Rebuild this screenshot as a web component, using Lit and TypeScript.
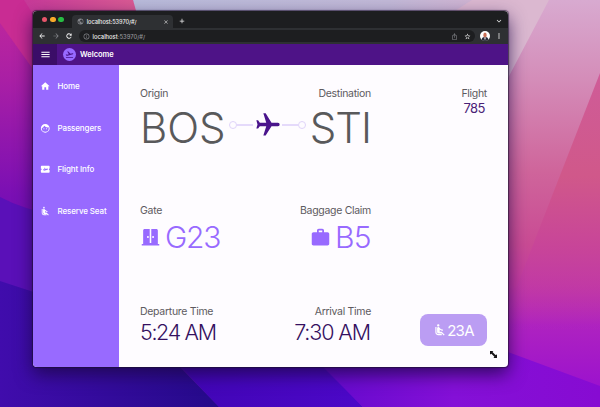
import { LitElement, html, css, svg } from "lit";
import { customElement, property } from "lit/decorators.js";

const ICONS: Record<string, string> = {
  home: "M10 20v-6h4v6h5v-8h3L12 3 2 12h3v8z",
  face: "M10.25 13a1.25 1.25 0 1 1-2.5 0 1.25 1.25 0 0 1 2.5 0zM15 11.75a1.25 1.25 0 1 0 0 2.5 1.25 1.25 0 0 0 0-2.5zM22 12a10 10 0 1 1-20 0 10 10 0 0 1 20 0zM20 12c0-.78-.12-1.53-.33-2.24-.7.15-1.42.24-2.17.24a10 10 0 0 1-7.76-3.69A10.02 10.02 0 0 1 4 11.86V12a8 8 0 1 0 16 0z",
  ticket: "M20.2 12c0-1 .8-2 1.8-2V5.500C22 4.700 21.300 4 20.500 4h-17C2.700 4 2 4.700 2 5.500V10c1 0 1.900.9 1.900 2S3 14 2 14v4.500c0 .8.700 1.500 1.500 1.500h17c.8 0 1.500-.7 1.500-1.500V14c-1 0-1.800-1-1.800-2zM17.700 13.300 8.900 15.700 6.600 11.800l.8-.2 1.300 1 2.200-.6L9 8.800l1.200-.3 3 2.900 3.200-.9c.6-.2 1.300.2 1.500.8s-.1 1.600-.2 2z",
  seat: "M7.590 5.410c-.78-.78-.78-2.050 0-2.830.78-.78 2.050-.78 2.830 0 .78.78.78 2.050 0 2.830-.79.79-2.050.79-2.830 0zM6 16V7H4v9c0 2.760 2.240 5 5 5h6v-2H9c-1.660 0-3-1.340-3-3zM20 20.070 14.930 15H11.500v-3.680c1.400 1.150 3.600 2.160 5.500 2.160v-2.160c-1.660.02-3.610-.87-4.670-2.040l-1.400-1.550c-.19-.21-.43-.38-.69-.5-.29-.14-.62-.23-.96-.23h-.03C8.010 7 7 8.010 7 9.250V15c0 1.660 1.340 3 3 3h5.070l3.500 3.500z",
  plane: "M21 16v-2l-8-5V3.500a1.500 1.500 0 0 0-3 0V9l-8 5v2l8-2.500V19l-2 1.500V22l3.500-1 3.500 1v-1.500L13 19v-5.500z",
  door: "M2 19.300V21h20v-1.700h-1.600V4c0-1-.7-1.700-1.700-1.700h-5.800v16h-1.800v-16H5.300c-1 0-1.700.7-1.700 1.700v15.300zM8.200 10.300h1.700v2.200H8.200zM14.100 10.300h1.700v2.200h-1.700z",
  bag: "M20 6h-4V4c0-1.100-.9-2-2-2h-4c-1.100 0-2 .9-2 2v2H4c-1.100 0-2 .9-2 2v11c0 1.100.9 2 2 2h16c1.100 0 2-.9 2-2V8c0-1.100-.9-2-2-2zm-10 0V4h4v2z",
  takeoff: "M2.500 19h19v2h-19zM22.070 9.640a1.500 1.500 0 0 0-1.840-1.060L14.920 10 8.020 3.570l-1.930.51 4.140 7.170-4.970 1.330-1.970-1.540-1.450.39 2.590 4.490L21 11.490c.81-.23 1.280-1.050 1.070-1.850z",
  menu: "M3 18.200h18v-2.400H3zM3 13.200h18v-2.400H3zM3 8.200h18V5.800H3z",
  back: "M20 10.800H7.830l5.590-5.390L12 4l-8 8 8 8 1.410-1.410-5.580-5.390H20z",
  forward: "m12 4-1.410 1.410L16.170 11H4v2h12.170l-5.580 5.590L12 20l8-8z",
  reload: "M17.650 6.350A8 8 0 1 0 19.730 14h-2.600A5.500 5.500 0 1 1 12 6.500c1.500 0 2.900.6 3.900 1.600L13 11h7V4z",
  info: "M11 7h2v2h-2zm0 4h2v6h-2zm1-9a10 10 0 1 0 0 20 10 10 0 0 0 0-20zm0 18a8 8 0 1 1 0-16 8 8 0 0 1 0 16z",
  share: "m16 5-1.420 1.420-1.590-1.590V16h-1.980V4.830L9.420 6.420 8 5l4-4zm4 5v11c0 1.100-.9 2-2 2H6a2 2 0 0 1-2-2V10c0-1.110.89-2 2-2h3v2H6v11h12V10h-3V8h3a2 2 0 0 1 2 2z",
  star: "m22 9.240-7.190-.62L12 2 9.190 8.630 2 9.240l5.460 4.730L5.820 21 12 17.270 18.180 21l-1.630-7.030zM12 15.400l-3.760 2.270 1-4.280-3.320-2.880 4.380-.38L12 6.100l1.710 4.040 4.380.38-3.320 2.880 1 4.280z",
  close: "M19 6.410 17.590 5 12 10.590 6.410 5 5 6.410 10.590 12 5 17.590 6.410 19 12 13.410 17.590 19 19 17.590 13.410 12z",
  plus: "M21 10.500h-7.500V3h-3v7.500H3v3h7.500V21h3v-7.500H21z",
  chevron: "M5 7 12 13.500 19 7l2 2.200-9 8.600-9-8.600z",
  more: "M12 8a2.200 2.200 0 1 0 0-4.400A2.200 2.200 0 0 0 12 8zm0 6.200a2.200 2.200 0 1 0 0-4.400 2.200 2.200 0 0 0 0 4.400zm0 6.200a2.200 2.200 0 1 0 0-4.400 2.200 2.200 0 0 0 0 4.400z",
  globe: "M12 2a10 10 0 1 0 0 20 10 10 0 0 0 0-20zm-1 17.900A8 8 0 0 1 4.200 10.200L9 15v1c0 1.100.9 2 2 2zm6.900-2.500A2 2 0 0 0 16 16h-1v-3c0-.6-.4-1-1-1H8v-2h2c.6 0 1-.4 1-1V7h2a2 2 0 0 0 2-2v-.4a8 8 0 0 1 2.900 12.800z",
};

@customElement("ui-icon")
export class UiIcon extends LitElement {
  @property() name = "home";
  static styles = css`
    :host { display: block; width: 12px; height: 12px; flex: none; }
    svg { display: block; width: 100%; height: 100%; fill: currentColor; }
  `;
  render() {
    return html`<svg viewBox="0 0 24 24">${svg`<path fill-rule="evenodd" d=${ICONS[this.name]}></path>`}</svg>`;
  }
}

@customElement("desktop-wallpaper")
export class DesktopWallpaper extends LitElement {
  static styles = css`
    :host { display: block; }
    svg { display: block; width: 600px; height: 407px; }
  `;
  render() {
    return html`<svg viewBox="0 0 600 407" preserveAspectRatio="none">
      <defs>
        <linearGradient id="left" x1="0" y1="0" x2="0" y2="1">
          <stop offset="0" stop-color="#c2289b"></stop>
          <stop offset=".2" stop-color="#a91fa5"></stop>
          <stop offset=".48" stop-color="#7a0fb4"></stop>
          <stop offset="1" stop-color="#4a0cae"></stop>
        </linearGradient>
        <linearGradient id="right" x1="0" y1="0" x2="0" y2="1">
          <stop offset="0" stop-color="#d8aad0"></stop>
          <stop offset=".2" stop-color="#d48cb8"></stop>
          <stop offset=".42" stop-color="#cf659b"></stop>
          <stop offset=".6" stop-color="#c94b94"></stop>
          <stop offset=".7" stop-color="#c43aa2"></stop>
          <stop offset=".8" stop-color="#ae22c0"></stop>
          <stop offset="1" stop-color="#960dd2"></stop>
        </linearGradient>
        <linearGradient id="rose" x1="0" y1="0" x2="0" y2="1">
          <stop offset="0" stop-color="#cf5c98"></stop>
          <stop offset=".4" stop-color="#d0588a"></stop>
          <stop offset=".7" stop-color="#c7439a"></stop>
          <stop offset="1" stop-color="#b62cb6" stop-opacity="0"></stop>
        </linearGradient>
        <linearGradient id="top" x1="0" y1="0" x2="1" y2="0">
          <stop offset="0" stop-color="#b9bbda"></stop>
          <stop offset=".75" stop-color="#c2b9d7"></stop>
          <stop offset="1" stop-color="#d0b4d2"></stop>
        </linearGradient>
        <linearGradient id="coral" x1="0" y1="0" x2="1" y2="0">
          <stop offset="0" stop-color="#c73999"></stop>
          <stop offset="1" stop-color="#dc5f92"></stop>
        </linearGradient>
        <linearGradient id="floor" x1="0" y1="0" x2="1" y2="0">
          <stop offset="0" stop-color="#400cac"></stop>
          <stop offset="1" stop-color="#250a8a"></stop>
        </linearGradient>
        <linearGradient id="floor2" x1="0" y1="0" x2="1" y2="0">
          <stop offset="0" stop-color="#4005b4"></stop>
          <stop offset="1" stop-color="#4c08c8"></stop>
        </linearGradient>
        <linearGradient id="floor3" x1="0" y1="0" x2="1" y2="0">
          <stop offset="0" stop-color="#6109cc"></stop>
          <stop offset=".5" stop-color="#8410d7"></stop>
          <stop offset="1" stop-color="#870bd2"></stop>
        </linearGradient>
      </defs>
      <path fill="url(#right)" d="M0 0H600V407H0z"></path>
      <path fill="url(#left)" d="M0 0H250V407H0z"></path>
      <path fill="#c92c93" d="M0 23 45 86V0H0z"></path>
      <path fill="url(#coral)" d="M24 0H133L150 40H50z"></path>
      <path fill="url(#top)" d="M133 0H475V60H150z"></path>
      <path fill="#dbb8d0" d="M472 0H549L508 78V20L450 14z"></path>
      <path fill="url(#rose)" d="M600 73 552 196 500 330H600z"></path>
      <path fill="#5a10b8" d="M0 197Q24 210 60 216V407H0z"></path>
      <path fill="url(#floor)" d="M0 281 180 340V367L219 407H0z"></path>
      <path fill="url(#floor2)" d="M165 350H308L363 407H219z"></path>
      <path fill="url(#floor3)" d="M308 352H508L600 386V407H363z"></path>
    </svg>`;
  }
}

@customElement("app-root")
export class AppRoot extends LitElement {
  static styles = css`
    :host { display: block; position: relative; width: 600px; height: 407px; overflow: hidden; font-family: Inter, "Liberation Sans", sans-serif; }
    * { box-sizing: border-box; }
    .wall { position: absolute; inset: 0; }
    .window { position: absolute; left: 33px; top: 11px; width: 475px; height: 356px; border-radius: 4px; overflow: hidden; background: #fefcff; display: flex; flex-direction: column; }
    .shadow { position: absolute; left: 33px; top: 11px; width: 475px; height: 356px; border-radius: 4px; box-shadow: 0 0 1px .5px #1b102c99, 0 7px 18px #1b0645cc; }
    .tabs { height: 17px; flex: none; background: #1d1e20; display: flex; align-items: center; padding: 0 6px 0 9px; color: #eee; }
    .lights { display: flex; gap: 2.800px; }
    .light { width: 5.400px; height: 5.400px; border-radius: 50%; }
    .red { background: #e7556b; } .amber { background: #f7a92a; } .green { background: #27bd43; }
    .tab { align-self: flex-end; width: 101px; height: 13px; margin-left: 8px; border-radius: 4px 4px 0 0; background: #2e3033; display: flex; align-items: center; padding: 0 4px 0 5px; font-size: 5.600px; font-weight: 500; }
    .tabtext { flex: 1; margin-left: 3px; letter-spacing: -.06px; }
    .i5 { width: 6px; height: 6px; } .i6 { width: 7px; height: 7px; }
    .globe { width: 7px; height: 7px; }
    .plus { width: 6px; height: 6px; margin-left: 6px; margin-top: 3px; flex: none; }
    .end { margin-left: auto; margin-top: 3px; }
    .tools { height: 16px; flex: none; background: #2e3033; display: flex; align-items: center; padding: 0 5px; color: #eee; }
    .nav { width: 8px; height: 8px; margin-right: 5.500px; }
    .more { width: 8px; height: 8px; }
    .dim { color: #85868b; }
    .address { flex: 1; height: 12px; border-radius: 6px; background: #1d1e20; display: flex; align-items: center; padding: 0 4px 0 4px; font-size: 5.800px; font-weight: 500; }
    .url { flex: 1; margin-left: 3px; color: #94959a; } .host { color: #eee; }
    .star { margin-left: 6px; }
    .avatar { width: 10px; height: 10px; margin: 0 5px 0 5px; flex: none; }
    .bar { height: 21px; flex: none; background: #4e1387; display: flex; align-items: center; color: #fff; font-size: 7.500px; font-weight: 600; }
    .burger { width: 24px; height: 21px; background: #3b0d68; display: grid; place-items: center; }
    .burger ui-icon { width: 11px; height: 11px; }
    .logo { width: 13px; height: 13px; border-radius: 50%; background: #986aff; color: #4a148c; display: grid; place-items: center; margin: 0 4px 0 6px; }
    .logo ui-icon { width: 9px; height: 9px; }
    .body { flex: 1; display: flex; min-height: 0; }
    .side { width: 86px; background: #986aff; color: #fff; display: flex; flex-direction: column; flex: none; padding-top: .7px; }
    .item { height: 41.500px; display: flex; align-items: center; padding-left: 6.500px; gap: 7.500px; font-size: 8px; font-weight: 500; letter-spacing: -.12px; white-space: nowrap; }
    .item ui-icon { width: 10.500px; height: 10.500px; }
    .main { flex: 1; display: flex; justify-content: space-between; padding: 21px 21px 0; color: #5d5a60; font-size: 10.500px; letter-spacing: -.3px; line-height: 15px; white-space: nowrap; }
    .trip { width: 231px; display: grid; grid-template-rows: 117px 101px 1fr; }
    .row { display: flex; justify-content: space-between; }
    .code { display: flex; align-items: center; justify-content: space-between; height: 52px; margin-top: 1px; color: #59595b; font-size: 42px; line-height: 52px; font-weight: 300; }
    .route { display: flex; align-items: center; margin-top: -6px; }
    .dot { width: 8px; height: 8px; border: 1.500px solid #e0d4fa; border-radius: 50%; }
    .line { width: 16px; height: 1.500px; background: #e5dafb; }
    .route ui-icon { width: 28px; height: 28px; transform: rotate(90deg); color: #4a148c; margin: 0 .5px; }
    .big { color: #986aff; font-size: 30px; line-height: 39px; font-weight: 300; display: flex; align-items: center; gap: 4px; letter-spacing: -1.200px; }
    .claim { letter-spacing: -.6px; }
    .big ui-icon { width: 21px; height: 21px; }
    .time { color: #35105f; font-size: 21.500px; line-height: 27px; font-weight: 300; letter-spacing: -1.350px; }
    .arrive { letter-spacing: -1.100px; padding-right: 1px; }
    .aside { display: flex; flex-direction: column; align-items: flex-end; justify-content: space-between; text-align: center; }
    .number { color: #4a2277; font-size: 13px; line-height: 15px; font-weight: 400; letter-spacing: -.6px; }
    .seat { width: 67px; height: 32px; border-radius: 8px; background: #bb9df3; color: #fff; display: flex; align-items: center; justify-content: center; gap: 0; margin-bottom: 21px; font-size: 15px; font-weight: 400; letter-spacing: -.7px; }
    .seat ui-icon { width: 14px; height: 14px; }
    .cursor { position: absolute; left: 490px; top: 351px; width: 7px; height: 7px; }
    .from { letter-spacing: -.1px; }
    .to { letter-spacing: -1px; }
  `;

  private items = [["home", "Home"], ["face", "Passengers"], ["ticket", "Flight Info"], ["seat", "Reserve Seat"]];

  render() {
    return html`
      <desktop-wallpaper class="wall"></desktop-wallpaper>
      <div class="shadow"></div>
      <div class="window">
        <div class="tabs">
          <div class="lights"><i class="light red"></i><i class="light amber"></i><i class="light green"></i></div>
          <div class="tab"><ui-icon class="globe dim" name="globe"></ui-icon><span class="tabtext">localhost:53970/#/</span><ui-icon class="i5" name="close"></ui-icon></div>
          <ui-icon class="plus" name="plus"></ui-icon>
          <ui-icon class="i5 end" name="chevron"></ui-icon>
        </div>
        <div class="tools">
          <ui-icon class="nav" name="back"></ui-icon><ui-icon class="nav dim" name="forward"></ui-icon><ui-icon class="nav" name="reload"></ui-icon>
          <div class="address">
            <ui-icon class="i6 dim" name="info"></ui-icon>
            <span class="url"><span class="host">localhost</span>:53970/#/</span>
            <ui-icon class="i6 dim" name="share"></ui-icon><ui-icon class="i6 star" name="star"></ui-icon>
          </div>
          <svg class="avatar" viewBox="0 0 10 10"><circle cx="5" cy="5" r="5" fill="#fff"></circle><path d="M1.500 8.500Q2 6 4 6h2Q8 6 8.500 8.500 5 11.500 1.500 8.500z" fill="#292b38"></path><ellipse cx="5" cy="4" rx="1.700" ry="2.500" fill="#c96e55"></ellipse><path d="M4.200 6.500h1.600L5 9.500z" fill="#fff"></path></svg>
          <ui-icon class="more" name="more"></ui-icon>
        </div>
        <div class="bar">
          <div class="burger"><ui-icon name="menu"></ui-icon></div>
          <div class="logo"><ui-icon name="takeoff"></ui-icon></div>
          <span>Welcome</span>
        </div>
        <div class="body">
          <nav class="side">${this.items.map(([icon, label]) => html`<div class="item"><ui-icon name=${icon}></ui-icon><span>${label}</span></div>`)}</nav>
          <main class="main">
            <div class="trip">
              <section>
                <div class="row"><span>Origin</span><span>Destination</span></div>
                <div class="code"><span class="from">BOS</span>
                  <div class="route"><i class="dot"></i><i class="line"></i><ui-icon name="plane"></ui-icon><i class="line"></i><i class="dot"></i></div>
                  <span class="to">STI</span></div>
              </section>
              <section>
                <div class="row"><span>Gate</span><span>Baggage Claim</span></div>
                <div class="row"><div class="big"><ui-icon name="door"></ui-icon><span>G23</span></div><div class="big claim"><ui-icon name="bag"></ui-icon><span>B5</span></div></div>
              </section>
              <section>
                <div class="row"><span>Departure Time</span><span>Arrival Time</span></div>
                <div class="row"><span class="time">5:24 AM</span><span class="time arrive">7:30 AM</span></div>
              </section>
            </div>
            <div class="aside">
              <div>Flight<div class="number">785</div></div>
              <div class="seat"><ui-icon name="seat"></ui-icon><span>23A</span></div>
            </div>
          </main>
        </div>
      </div>
      <svg class="cursor" viewBox="0 0 7 7"><path d="M0 0h3.400L2.500 1.100l3 3L7 3.500V7H3.500l.9-1.200-3-3L0 3.500z" fill="#171518"></path></svg>
    `;
  }
}
